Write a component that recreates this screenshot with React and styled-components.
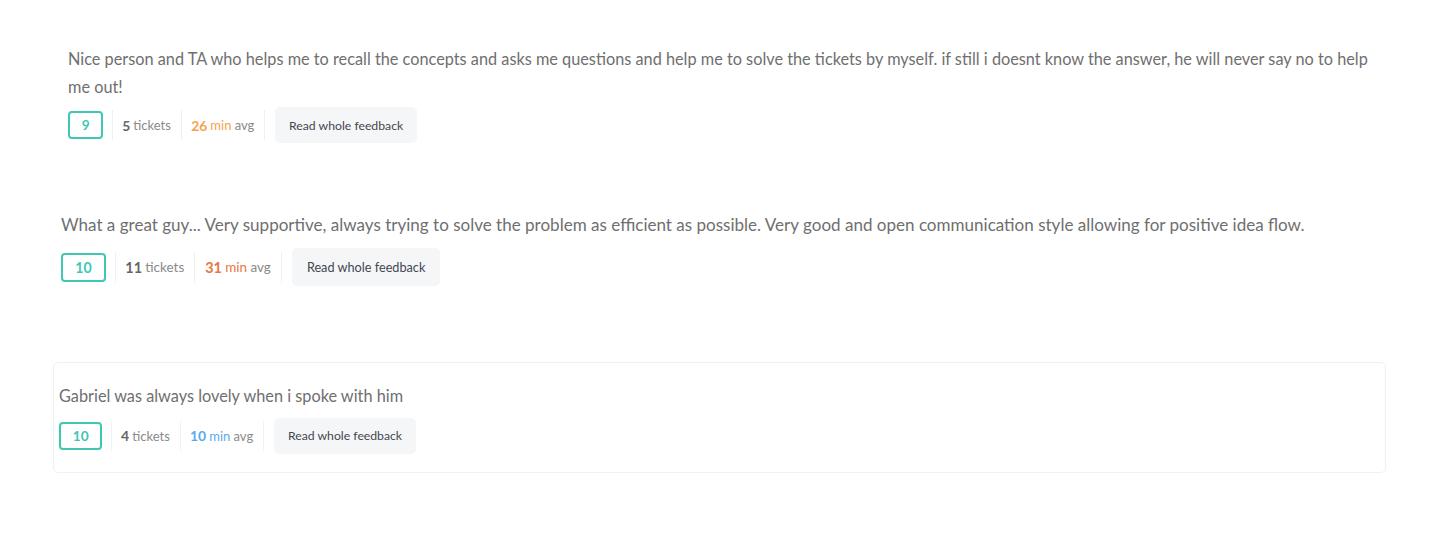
import React from "react";
import styled, { createGlobalStyle } from "styled-components";

const Global = createGlobalStyle`
  html, body { margin: 0; padding: 0; background: #ffffff; }
  body { font-family: Lato, "Noto Sans", sans-serif; -webkit-font-smoothing: antialiased; }
  * { box-sizing: border-box; }
`;

const Page = styled.main`
  display: flex;
  flex-direction: column;
  padding-top: 44px;
  width: 1440px;
`;

const Card = styled.article`
  margin-left: ${(p) => p.$left}px;
  margin-top: ${(p) => p.$top}px;
  width: ${(p) => p.$width}px;
  padding: ${(p) => p.$padT}px 5px ${(p) => p.$padB}px;
  border: 1px solid ${(p) => (p.$bordered ? "#f1f1f3" : "transparent")};
  border-radius: 5px;
  font-size: ${(p) => p.$size}px;
`;

const Text = styled.p`
  margin: 0;
  color: #6f6f6f;
  font-size: 1em;
  line-height: 1.72em;
`;

const Meta = styled.div`
  display: flex;
  align-items: center;
  margin-top: ${(p) => p.$gap}px;
  font-size: ${(p) => p.$metaSize}px;
`;

const Badge = styled.span`
  display: inline-flex;
  align-items: center;
  justify-content: center;
  height: 2.05em;
  padding: 0 0.86em;
  margin-right: 0.62em;
  border: 2px solid #3ec8b4;
  border-radius: 4px;
  color: #3ec8b4;
  font-weight: 700;
  font-size: 1.05em;
`;

const Stat = styled.span`
  display: flex;
  align-items: center;
  height: 2.3em;
  padding: 0 0.76em 0 0.72em;
  border-left: 1px solid #f0f0f2;
  color: #8a8a8a;
  white-space: nowrap;
`;

const Num = styled.b`
  font-weight: 700;
  color: ${(p) => p.$color || "#666666"};
  margin-right: 0.22em;
  font-size: 1.07em;
`;

const Unit = styled.span`
  color: ${(p) => p.$color || "#8a8a8a"};
  margin-right: 0.25em;
`;

const Divider = styled.span`
  width: 1px;
  height: 2.3em;
  background: #f0f0f2;
  margin-right: 0.76em;
`;

const Button = styled.button`
  display: inline-flex;
  align-items: center;
  height: 2.95em;
  padding: 0 1.15em;
  border: none;
  background: #f5f6f8;
  border-radius: 5px;
  color: #444650;
  font-family: inherit;
  font-size: 0.94em;
  cursor: pointer;
`;

const feedbacks = [
  {
    text:
      "Nice person and TA who helps me to recall the concepts and asks me questions and help me to solve the tickets by myself. if still i doesnt know the answer, he will never say no to help me out!",
    score: 9,
    tickets: 5,
    mins: 26,
    color: "#f6a24c",
    left: 62,
    top: 0,
    width: 1332,
    padT: 0,
    padB: 0,
    size: 16.3,
    metaSize: 13,
    gap: 6,
  },
  {
    text:
      "What a great guy... Very supportive, always trying to solve the problem as efficient as possible. Very good and open communication style allowing for positive idea flow.",
    score: 10,
    tickets: 11,
    mins: 31,
    color: "#e8773f",
    left: 55,
    top: 65,
    width: 1340,
    padT: 0,
    padB: 0,
    size: 17.05,
    metaSize: 13.5,
    gap: 9,
  },
  {
    text: "Gabriel was always lovely when i spoke with him",
    score: 10,
    tickets: 4,
    mins: 10,
    color: "#5aaaf0",
    left: 53,
    top: 75,
    width: 1333,
    padT: 19,
    padB: 18,
    size: 16.3,
    metaSize: 13,
    gap: 8,
    bordered: true,
  },
];

export default function App() {
  return (
    <>
      <Global />
      <Page>
        {feedbacks.map((f, i) => (
          <Card
            key={i}
            $left={f.left}
            $top={f.top}
            $width={f.width}
            $padT={f.padT}
            $padB={f.padB}
            $size={f.size}
            $bordered={f.bordered}
          >
            <Text>{f.text}</Text>
            <Meta $gap={f.gap} $metaSize={f.metaSize}>
              <Badge>{f.score}</Badge>
              <Stat>
                <Num>{f.tickets}</Num>tickets
              </Stat>
              <Stat>
                <Num $color={f.color}>{f.mins}</Num>
                <Unit $color={f.color}>min</Unit>avg
              </Stat>
              <Divider />
              <Button>Read whole feedback</Button>
            </Meta>
          </Card>
        ))}
      </Page>
    </>
  );
}
